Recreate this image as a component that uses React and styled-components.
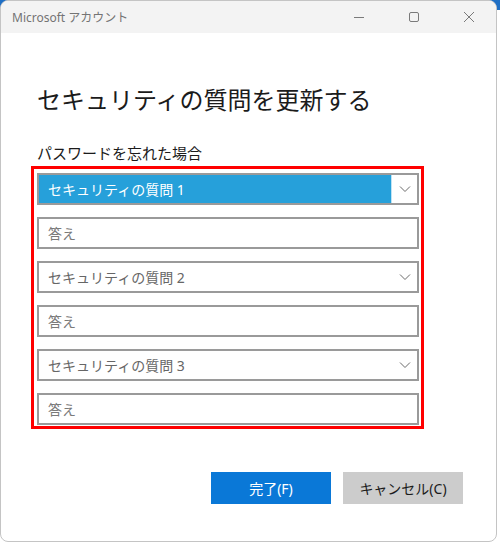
import React from 'react';
import styled, { createGlobalStyle } from 'styled-components';

const GlobalStyle = createGlobalStyle`
  body {
    margin: 0;
    background: linear-gradient(#1f6fc5 0, #1f6fc5 10px, #ffffff 10px);
    font-family: "Noto Sans", "Noto Sans CJK JP", sans-serif;
  }
`;

const Window = styled.div`
  width: 497px;
  height: 542px;
  box-sizing: border-box;
  border: 1px solid #c4c4c4;
  border-radius: 8px;
  overflow: hidden;
  background: #fff;
  display: flex;
  flex-direction: column;
`;

const TitleBar = styled.div`
  height: 32px;
  flex: none;
  background: #f3f3f3;
  display: flex;
  align-items: center;
  padding-left: 11px;
`;

const Title = styled.div`
  flex: 1;
  font-size: 12px;
  color: #747474;
`;

const Controls = styled.div`
  display: flex;
  height: 100%;
`;

const ControlButton = styled.div`
  width: 55px;
  height: 100%;
  display: flex;
  align-items: center;
  justify-content: center;
  color: #7a7a7a;
`;

const Body = styled.div`
  flex: 1;
  padding: 51px 0 0 30px;
  display: flex;
  flex-direction: column;
`;

const Heading = styled.h1`
  margin: 0;
  padding-left: 6px;
  font-size: 24px;
  line-height: 32px;
  font-weight: 400;
  color: #1b1b1b;
`;

const Label = styled.div`
  margin-top: 27px;
  padding-left: 6px;
  font-size: 15px;
  line-height: 20px;
  color: #1b1b1b;
`;

const Highlight = styled.div`
  margin-top: 3px;
  width: 393px;
  box-sizing: border-box;
  border: 3px solid #ff0000;
  padding: 4px 2px 1px 3px;
  display: flex;
  flex-direction: column;
  gap: 12px;
`;

const Field = styled.div`
  height: 32px;
  box-sizing: border-box;
  border: 2px solid #9a9a9a;
  display: flex;
  align-items: stretch;
  background: #fff;
  font-size: 14px;
`;

const FieldText = styled.div`
  flex: 1;
  display: flex;
  align-items: center;
  padding-left: 9px;
  background: ${p => (p.$selected ? '#26a0da' : 'transparent')};
  color: ${p => (p.$selected ? '#ffffff' : p.$placeholder ? '#7a7a7a' : '#666666')};
`;

const Arrow = styled.div`
  width: 25px;
  display: flex;
  align-items: center;
  justify-content: center;
  border-left: ${p => (p.$selected ? '1px solid #bfe3f4' : 'none')};
`;

const Footer = styled.div`
  margin-top: 43px;
  padding-right: 33px;
  display: flex;
  justify-content: flex-end;
  gap: 12px;
`;

const Button = styled.button`
  width: 120px;
  height: 32px;
  border: none;
  font-family: inherit;
  font-size: 14px;
  background: ${p => (p.$primary ? '#0a78d7' : '#cccccc')};
  color: ${p => (p.$primary ? '#ffffff' : '#1b1b1b')};
`;

function Chevron() {
  return (
    <svg width="12" height="8" viewBox="0 0 12 8">
      <path d="M1 1.5 L6 6.5 L11 1.5" fill="none" stroke="#6b6b6b" strokeWidth="1" />
    </svg>
  );
}

function Select({ label, selected }) {
  return (
    <Field>
      <FieldText $selected={selected}>{label}</FieldText>
      <Arrow $selected={selected}>
        <Chevron />
      </Arrow>
    </Field>
  );
}

function Answer() {
  return (
    <Field>
      <FieldText $placeholder>答え</FieldText>
    </Field>
  );
}

export default function App() {
  return (
    <>
      <GlobalStyle />
      <Window>
        <TitleBar>
          <Title>Microsoft アカウント</Title>
          <Controls>
            <ControlButton>
              <svg width="12" height="12" viewBox="0 0 12 12">
                <path d="M1 6.5 H11" stroke="#7a7a7a" strokeWidth="1" />
              </svg>
            </ControlButton>
            <ControlButton>
              <svg width="12" height="12" viewBox="0 0 12 12">
                <rect x="1.5" y="1.5" width="9" height="9" rx="1.5" fill="none" stroke="#7a7a7a" strokeWidth="1" />
              </svg>
            </ControlButton>
            <ControlButton>
              <svg width="12" height="12" viewBox="0 0 12 12">
                <path d="M1 1 L11 11 M11 1 L1 11" stroke="#7a7a7a" strokeWidth="1" />
              </svg>
            </ControlButton>
          </Controls>
        </TitleBar>
        <Body>
          <Heading>セキュリティの質問を更新する</Heading>
          <Label>パスワードを忘れた場合</Label>
          <Highlight>
            <Select label="セキュリティの質問 1" selected />
            <Answer />
            <Select label="セキュリティの質問 2" />
            <Answer />
            <Select label="セキュリティの質問 3" />
            <Answer />
          </Highlight>
          <Footer>
            <Button $primary>完了(F)</Button>
            <Button>キャンセル(C)</Button>
          </Footer>
        </Body>
      </Window>
    </>
  );
}
